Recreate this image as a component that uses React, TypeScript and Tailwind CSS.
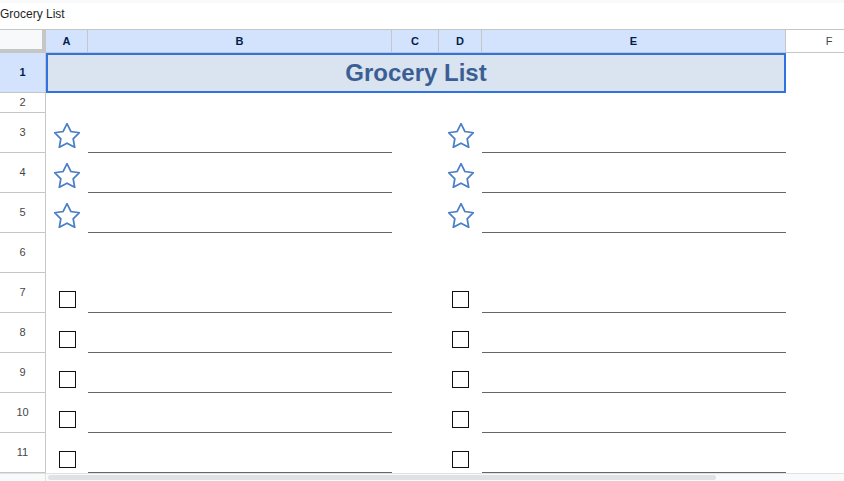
import React from "react";

const cols = "grid grid-cols-[46px_42px_304px_47px_43px_304px_86px]";

function Star() {
  return (
    <svg width="26" height="25" viewBox="1.5 1.5 21 20" fill="none">
      <polygon
        points="12,2 15.09,8.26 22,9.27 17,14.14 18.18,21.02 12,17.77 5.82,21.02 7,14.14 2,9.27 8.91,8.26"
        stroke="#4a7fc8"
        strokeWidth="1.4"
        strokeLinejoin="miter"
      />
    </svg>
  );
}

function Box() {
  return <div className="w-[17px] h-[17px] border-[1.5px] border-[#111] bg-white" />;
}

function RowHead({ n, bold = false, h = "h-[40px]" }: { n: number; bold?: boolean; h?: string }) {
  return (
    <div
      className={`${h} flex items-center justify-center border-r border-b border-[#c4c7c5] text-[11px] ${
        bold ? "font-bold text-[#041e49] bg-[#d3e3fd]" : "text-[#444746] bg-white"
      }`}
    >
      {n}
    </div>
  );
}

function ItemRow({ n, kind }: { n: number; kind: "star" | "box" }) {
  const icon = kind === "star" ? <Star /> : <Box />;
  return (
    <div className={`${cols} h-[40px]`}>
      <RowHead n={n} />
      <div className="flex items-end justify-center pb-[5px]">{icon}</div>
      <div className="border-b border-[#666666]" />
      <div />
      <div className="flex items-end justify-center pb-[5px]">{icon}</div>
      <div className="border-b border-[#666666]" />
      <div />
    </div>
  );
}

export default function App() {
  const headers = ["A", "B", "C", "D", "E"];
  return (
    <div className="w-[844px] h-[481px] overflow-hidden bg-white font-['Liberation_Sans',Arial,sans-serif] flex flex-col">
      {/* top bar */}
      <div className="h-[29px] shrink-0">
        <div className="h-[3px] bg-[#f8f9fa]" />
        <div className="h-[26px] leading-[22px] text-[12px] text-[#1f1f1f]">Grocery List</div>
      </div>

      {/* column headers */}
      <div className={`${cols} h-[24px] shrink-0 border-t border-[#c4c7c5]`}>
        <div className="bg-[#f8f9fa] border-r-[4px] border-b-[4px] border-[#c4c7c5]" />
        {headers.map((h) => (
          <div
            key={h}
            className="bg-[#d3e3fd] border-r border-b border-[#c4c7c5] flex items-center justify-center text-[11px] font-bold text-[#041e49]"
          >
            {h}
          </div>
        ))}
        <div className="bg-white border-b border-[#c4c7c5] flex items-center justify-center text-[11px] text-[#444746]">
          F
        </div>
      </div>

      {/* row 1 */}
      <div className="grid grid-cols-[46px_740px_86px] h-[40px] shrink-0">
        <RowHead n={1} bold />
        <div className="bg-[#dae3f0] border-2 border-[#2f72e4] flex items-center justify-center text-[24px] font-bold text-[#3a5f94]">
          Grocery List
        </div>
        <div />
      </div>

      {/* row 2 */}
      <div className={`${cols} h-[20px] shrink-0`}>
        <RowHead n={2} h="h-[20px]" />
      </div>

      <ItemRow n={3} kind="star" />
      <ItemRow n={4} kind="star" />
      <ItemRow n={5} kind="star" />

      {/* row 6 */}
      <div className={`${cols} h-[40px] shrink-0`}>
        <RowHead n={6} />
      </div>

      <ItemRow n={7} kind="box" />
      <ItemRow n={8} kind="box" />
      <ItemRow n={9} kind="box" />
      <ItemRow n={10} kind="box" />
      <ItemRow n={11} kind="box" />

      {/* bottom scroll area */}
      <div className="h-[8px] shrink-0 border-t border-[#e1e3e1] bg-[#f8f9fa] flex">
        <div className="w-[46px] border-r border-[#e1e3e1]" />
        <div className="ml-[2px] mt-[1px] w-[668px] h-[5px] rounded-full bg-[#dfe1e4]" />
      </div>
    </div>
  );
}
